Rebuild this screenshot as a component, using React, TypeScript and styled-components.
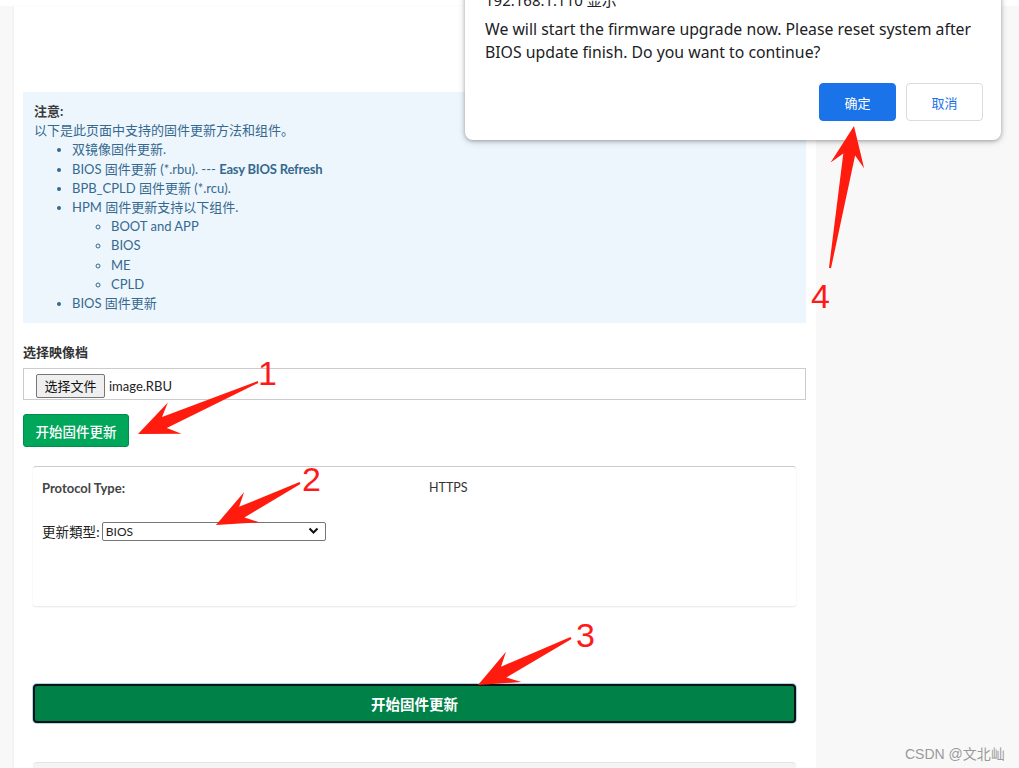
import React from "react";
import styled, { createGlobalStyle } from "styled-components";

const Global = createGlobalStyle`
  html, body { margin: 0; padding: 0; }
  body {
    background: #f8f8f8;
    font-family: Lato, "Noto Sans", "Noto Sans CJK SC", sans-serif;
    color: #333;
    overflow: hidden;
  }
  #root { position: relative; width: 1019px; height: 768px; overflow: hidden; }
`;

const Page = styled.div`
  display: flex;
  flex-direction: column;
  height: 768px;
`;

const TopStrip = styled.div`
  height: 6px;
  background: #fff;
  flex: none;
`;

const Body = styled.div`
  display: flex;
  flex: 1;
  min-height: 0;
`;

const Gutter = styled.div`
  width: 14px;
  flex: none;
`;

const Panel = styled.main`
  width: 802px;
  flex: none;
  background: #fff;
  padding: 86px 10px 0 9px;
  box-sizing: border-box;
  display: flex;
  flex-direction: column;
  overflow: hidden;
  box-shadow: -1px 0 2px rgba(0, 0, 0, 0.04);
  & > * { flex-shrink: 0; }
`;

const Note = styled.div`
  background: #eef6fd;
  padding: 10px 11px 10px 11px;
  font-size: 13px;
  line-height: 19.2px;
  color: #35698f;
`;

const NoteTitle = styled.div`
  font-weight: 700;
  color: #3a3a3a;
`;

const List = styled.ul<{ $nested?: boolean }>`
  margin: 0;
  padding-left: ${(p) => (p.$nested ? "39px" : "38px")};
  list-style: ${(p) => (p.$nested ? "circle" : "disc")};
`;

const Strong = styled.span`
  font-weight: 700;
  letter-spacing: -0.2px;
`;

const Label = styled.div`
  margin-top: 20px;
  font-size: 13px;
  font-weight: 700;
  line-height: 18px;
  color: #333;
`;

const FileBox = styled.div`
  margin-top: 7px;
  height: 32px;
  box-sizing: border-box;
  border: 1px solid #ccc;
  display: flex;
  align-items: center;
  padding-left: 12px;
  gap: 4px;
  font-size: 13px;
`;

const FileButton = styled.button`
  height: 24px;
  width: 69px;
  padding: 0;
  background: #efefef;
  border: 1px solid #767676;
  border-radius: 2px;
  font-family: "Noto Sans CJK SC", sans-serif;
  font-size: 13px;
  color: #111;
  margin-top: 3px;
`;

const FileName = styled.span`
  color: #222;
  margin-top: 3px;
`;

const GreenButton = styled.button`
  margin-top: 14px;
  align-self: flex-start;
  width: 106px;
  height: 33px;
  background: #00a65a;
  border: 1px solid #008d4c;
  border-radius: 3px;
  color: #fff;
  font-family: "Noto Sans CJK SC", sans-serif;
  font-size: 13.5px;
  font-weight: 500;
  padding: 0;
`;

const Card = styled.section`
  margin: 19px 10px 0 10px;
  height: 140px;
  box-sizing: border-box;
  border-top: 1px solid #c8cbd0;
  border-radius: 3px;
  box-shadow: 0 1px 2px rgba(0, 0, 0, 0.1);
  padding: 12px 9px;
  font-size: 12.5px;
`;

const Row = styled.div`
  display: grid;
  grid-template-columns: 387px 1fr;
  line-height: 18px;
  color: #333;
`;

const BoldCell = styled.div`
  font-weight: 700;
  font-size: 13px;
  color: #444;
`;

const SelectRow = styled.div`
  margin-top: 24px;
  display: flex;
  align-items: center;
  gap: 2px;
  font-family: "Noto Sans CJK SC", sans-serif;
  font-size: 13.5px;
  color: #222;
`;

const SelectBox = styled.div`
  width: 224px;
  height: 19px;
  box-sizing: border-box;
  border: 1px solid #767676;
  border-radius: 2px;
  display: flex;
  align-items: center;
  justify-content: space-between;
  padding: 0 6px 0 3px;
  font-family: Lato, "Noto Sans", sans-serif;
  font-size: 12px;
  color: #222;
`;

const BigButton = styled.button`
  margin: 78px 10px 0 10px;
  height: 39px;
  background: #008148;
  border: 2px solid #111;
  border-radius: 4px;
  box-shadow: 0 0 0 1px #a9d6f2;
  color: #fff;
  font-family: "Noto Sans CJK SC", sans-serif;
  font-size: 14.5px;
  font-weight: 700;
`;

const NextCard = styled.div`
  margin: 39px 10px 0 10px;
  height: 40px;
  background: #f4f4f4;
  border-top: 1px solid #e4e4e4;
  border-radius: 4px 4px 0 0;
`;

const Dialog = styled.div`
  position: absolute;
  left: 465px;
  top: -12px;
  width: 536px;
  box-sizing: border-box;
  background: #fff;
  border-radius: 8px;
  box-shadow: 0 1px 4px rgba(0, 0, 0, 0.3), 0 2px 8px rgba(0, 0, 0, 0.12);
  padding: 0 18px 19px 20px;
  font-family: "Noto Sans", "Noto Sans CJK SC", sans-serif;
  color: #202124;
`;

const DialogTitle = styled.div`
  font-size: 15px;
  line-height: 24px;
`;

const DialogMessage = styled.div`
  margin-top: 6px;
  font-size: 15.8px;
  line-height: 23px;
`;

const DialogActions = styled.div`
  margin-top: 19px;
  display: flex;
  justify-content: flex-end;
  gap: 10px;
`;

const DialogButton = styled.button<{ $primary?: boolean }>`
  width: 77px;
  height: 38px;
  border-radius: 4px;
  font-family: "Noto Sans CJK SC", sans-serif;
  font-size: 13px;
  border: 1px solid ${(p) => (p.$primary ? "#1a73e8" : "#dadce0")};
  background: ${(p) => (p.$primary ? "#1a73e8" : "#fff")};
  color: ${(p) => (p.$primary ? "#fff" : "#1a73e8")};
`;

const Overlay = styled.svg`
  position: absolute;
  left: 0;
  top: 0;
  pointer-events: none;
`;

const Num = styled.span<{ $x: number; $y: number }>`
  position: absolute;
  left: ${(p) => p.$x}px;
  top: ${(p) => p.$y}px;
  font-family: "Liberation Sans", Arial, sans-serif;
  font-size: 34px;
  line-height: 34px;
  color: #ff1a1a;
`;

const Watermark = styled.span`
  position: absolute;
  left: 905px;
  top: 743px;
  font-family: "Liberation Sans", "Noto Sans CJK SC", sans-serif;
  font-size: 14px;
  color: #9a9a9a;
`;

function arrowPoints(sx: number, sy: number, tx: number, ty: number, L = 40, W = 17) {
  const dx = tx - sx;
  const dy = ty - sy;
  const len = Math.hypot(dx, dy);
  const ux = dx / len;
  const uy = dy / len;
  const nx = -uy;
  const ny = ux;
  const p = (ax: number, ay: number) => `${ax.toFixed(1)},${ay.toFixed(1)}`;
  const neck = L * 0.72;
  const pts = [
    p(sx + nx * 1, sy + ny * 1),
    p(tx - ux * neck + nx * 6, ty - uy * neck + ny * 6),
    p(tx - ux * L + nx * W, ty - uy * L + ny * W),
    p(tx, ty),
    p(tx - ux * L - nx * W, ty - uy * L - ny * W),
    p(tx - ux * neck - nx * 6, ty - uy * neck - ny * 6),
    p(sx - nx * 1, sy - ny * 1),
  ];
  return pts.join(" ");
}

const arrows = [
  { sx: 258, sy: 382, tx: 138, ty: 434 },
  { sx: 300, sy: 483, tx: 216, ty: 525 },
  { sx: 571, sy: 638, tx: 478, ty: 685 },
  { sx: 830, sy: 268, tx: 854, ty: 126 },
];

export default function App() {
  return (
    <>
      <Global />
      <Page>
        <TopStrip />
        <Body>
          <Gutter />
          <Panel>
            <Note>
              <NoteTitle>注意:</NoteTitle>
              <div>以下是此页面中支持的固件更新方法和组件。</div>
              <List>
                <li>双镜像固件更新.</li>
                <li>
                  BIOS 固件更新 (*.rbu). --- <Strong>Easy BIOS Refresh</Strong>
                </li>
                <li>BPB_CPLD 固件更新 (*.rcu).</li>
                <li>
                  HPM 固件更新支持以下组件.
                  <List $nested>
                    <li>BOOT and APP</li>
                    <li>BIOS</li>
                    <li>ME</li>
                    <li>CPLD</li>
                  </List>
                </li>
                <li>BIOS 固件更新</li>
              </List>
            </Note>
            <Label>选择映像档</Label>
            <FileBox>
              <FileButton>选择文件</FileButton>
              <FileName>image.RBU</FileName>
            </FileBox>
            <GreenButton>开始固件更新</GreenButton>
            <Card>
              <Row>
                <BoldCell>Protocol Type:</BoldCell>
                <div>HTTPS</div>
              </Row>
              <SelectRow>
                <span>更新類型:</span>
                <SelectBox>
                  <span>BIOS</span>
                  <svg width="11" height="8" viewBox="0 0 11 8">
                    <path d="M1.5 1.5 L5.5 5.5 L9.5 1.5" fill="none" stroke="#111" strokeWidth="2" />
                  </svg>
                </SelectBox>
              </SelectRow>
            </Card>
            <BigButton>开始固件更新</BigButton>
            <NextCard />
          </Panel>
        </Body>
      </Page>

      <Dialog>
        <DialogTitle>192.168.1.110 显示</DialogTitle>
        <DialogMessage>
          We will start the firmware upgrade now. Please reset system after BIOS update finish. Do you want to continue?
        </DialogMessage>
        <DialogActions>
          <DialogButton $primary>确定</DialogButton>
          <DialogButton>取消</DialogButton>
        </DialogActions>
      </Dialog>

      <Overlay width="1019" height="768" viewBox="0 0 1019 768">
        {arrows.map((a, i) => (
          <polygon key={i} points={arrowPoints(a.sx, a.sy, a.tx, a.ty)} fill="#ff1c0f" />
        ))}
      </Overlay>
      <Num $x={258} $y={356}>1</Num>
      <Num $x={302} $y={462}>2</Num>
      <Num $x={576} $y={618}>3</Num>
      <Num $x={811} $y={279}>4</Num>
      <Watermark>CSDN @文北屾</Watermark>
    </>
  );
}
